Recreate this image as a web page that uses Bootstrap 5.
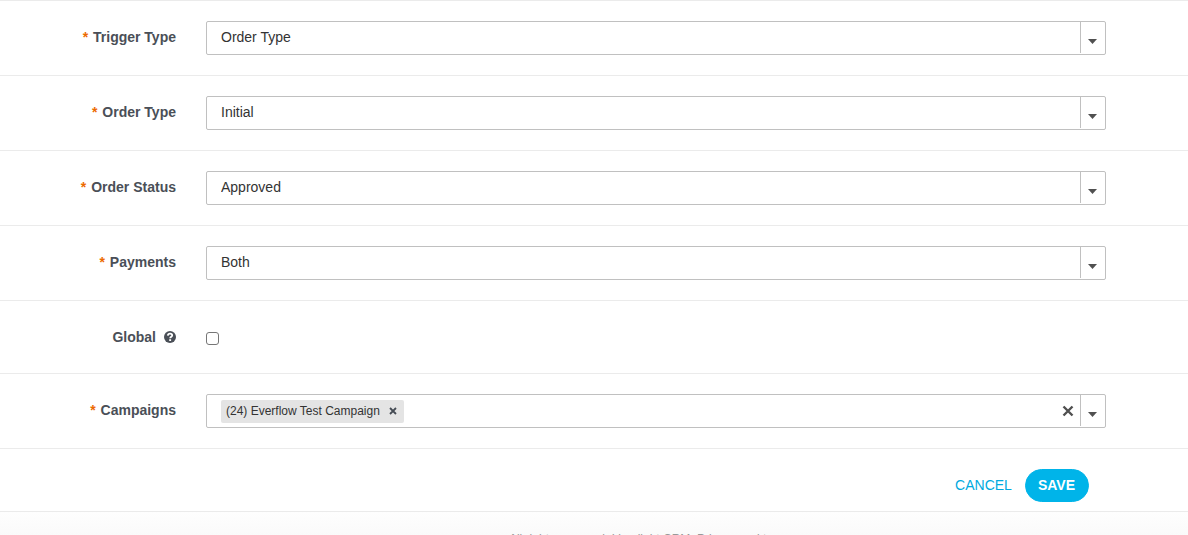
<!DOCTYPE html>
<html lang="en">
<head>
<meta charset="utf-8">
<meta name="viewport" content="width=device-width, initial-scale=1">
<title>Trigger settings</title>
<link href="https://cdn.jsdelivr.net/npm/bootstrap@5.3.0/dist/css/bootstrap.min.css" rel="stylesheet">
<style>
  html::-webkit-scrollbar { display: none; }
  body { font-family: "Liberation Sans", Arial, sans-serif; font-size: 14px; line-height: 20px; color: #333; background: #fff; }
  .form-line { border-top: 1px solid #ebebeb; padding: 20px 82px 20px 0; gap: 30px; }
  .field-label { width: 176px; padding: 6px 0 0; font-weight: 700; color: #4a4f57; text-align: right; }
  .required-mark { color: #ec6a00; margin-right: 1px; }
  .picker { height: 34px; border: 1px solid #c0c0c0; border-radius: 2px; background: #fff; }
  .picker .form-select { border: 0; border-radius: 2px; padding: 0 40px 2px 14px; font-size: 14px; line-height: 20px; color: #333; background: none; height: 32px; }
  .picker-arrow { width: 25px; height: 31px; border-left: 1px solid #c0c0c0; pointer-events: none; padding: 8px 2px 0 0; }
  .picker-open { border-width: 0 0 0 1px; background: none; pointer-events: auto; }
  .tick { height: 32px; padding-top: 11px; }
  .tick .form-check-input { width: 13px; height: 13px; margin: 0; border: 1px solid #767676; border-radius: 3px; }
  .chip { height: 23px; margin: 5px 0 0 14px; padding: 0 7px 2px 5px; gap: 9px; background: #e4e4e4; border-radius: 2px; font-size: 12px; line-height: 20px; }
  .plain { border: 0; background: none; padding: 0; line-height: 0; }
  .clear-all { margin-right: 6px; }
  .actions { padding: 20px 99px 9px 0; gap: 13px; border-top: 1px solid #ebebeb; }
  .link-cancel { color: #00a9e0; text-decoration: none; padding-bottom: 2px; }
  .btn-save { --bs-btn-color: #fff; --bs-btn-bg: #00b4e9; --bs-btn-border-color: #00b4e9; --bs-btn-hover-color: #fff; --bs-btn-hover-bg: #009fd0; height: 33px; padding: 0 13px 2px 12px; font-size: 14px; font-weight: 700; line-height: 20px; }
  .page-foot { border-top: 1px solid #ebebeb; background: linear-gradient(#fefefe, #fafafa 24px); padding: 17px 0 0 114px; font-size: 12px; line-height: 20px; color: #999; }
</style>
</head>
<body>
<form>
  <div class="form-line d-flex">
    <label class="field-label flex-shrink-0" for="trigger"><span class="required-mark">*</span> Trigger Type</label>
    <div class="picker flex-grow-1 position-relative">
      <select class="form-select" id="trigger"><option>Order Type</option></select>
      <span class="picker-arrow position-absolute top-0 end-0 d-flex align-items-center justify-content-center"><svg width="9" height="5" viewBox="0 0 9 5"><path d="M0 0h9L4.500 5z" fill="#505050"/></svg></span>
    </div>
  </div>
  <div class="form-line d-flex">
    <label class="field-label flex-shrink-0" for="order"><span class="required-mark">*</span> Order Type</label>
    <div class="picker flex-grow-1 position-relative">
      <select class="form-select" id="order"><option>Initial</option></select>
      <span class="picker-arrow position-absolute top-0 end-0 d-flex align-items-center justify-content-center"><svg width="9" height="5" viewBox="0 0 9 5"><path d="M0 0h9L4.500 5z" fill="#505050"/></svg></span>
    </div>
  </div>
  <div class="form-line d-flex">
    <label class="field-label flex-shrink-0" for="status"><span class="required-mark">*</span> Order Status</label>
    <div class="picker flex-grow-1 position-relative">
      <select class="form-select" id="status"><option>Approved</option></select>
      <span class="picker-arrow position-absolute top-0 end-0 d-flex align-items-center justify-content-center"><svg width="9" height="5" viewBox="0 0 9 5"><path d="M0 0h9L4.500 5z" fill="#505050"/></svg></span>
    </div>
  </div>
  <div class="form-line d-flex">
    <label class="field-label flex-shrink-0" for="payments"><span class="required-mark">*</span> Payments</label>
    <div class="picker flex-grow-1 position-relative">
      <select class="form-select" id="payments"><option>Both</option></select>
      <span class="picker-arrow position-absolute top-0 end-0 d-flex align-items-center justify-content-center"><svg width="9" height="5" viewBox="0 0 9 5"><path d="M0 0h9L4.500 5z" fill="#505050"/></svg></span>
    </div>
  </div>
  <div class="form-line d-flex">
    <label class="field-label flex-shrink-0 d-flex justify-content-end gap-2" for="global">Global
      <svg width="12" height="20" viewBox="0 0 12 20"><circle cx="6" cy="10" r="6" fill="#4a4f57"/><path d="M3.800 8.600C4 7.300 4.900 6.700 6 6.700c1.300 0 2.200.7 2.200 1.700C8.200 9.700 6.200 9.700 6.200 11.200" fill="none" stroke="#fff" stroke-width="1.800"/><path d="M5.200 12.200h1.900v1.800H5.200z" fill="#fff"/></svg>
    </label>
    <div class="tick d-flex"><input class="form-check-input" type="checkbox" id="global"></div>
  </div>
  <div class="form-line d-flex">
    <span class="field-label flex-shrink-0" id="campaigns"><span class="required-mark">*</span> Campaigns</span>
    <div class="picker flex-grow-1 d-flex" role="group" aria-labelledby="campaigns">
      <span class="chip d-flex align-items-center">(24) Everflow Test Campaign
        <button class="plain" type="button" aria-label="Remove campaign"><svg width="8" height="8" viewBox="0 0 8 8"><path d="M1 1l6 6M7 1L1 7" stroke="#454b54" stroke-width="1.800"/></svg></button>
      </span>
      <button class="plain clear-all ms-auto" type="button" aria-label="Clear all"><svg width="12" height="12" viewBox="0 0 12 12"><path d="M1.500 1.500l9 9M10.500 1.500l-9 9" stroke="#505050" stroke-width="2.400"/></svg></button>
      <button class="picker-arrow picker-open d-flex align-items-center justify-content-center" type="button" aria-label="Open list"><svg width="9" height="5" viewBox="0 0 9 5"><path d="M0 0h9L4.500 5z" fill="#505050"/></svg></button>
    </div>
  </div>
  <div class="actions d-flex justify-content-end align-items-center">
    <a class="link-cancel" href="#">CANCEL</a>
    <button class="btn btn-save rounded-pill" type="submit">SAVE</button>
  </div>
</form>
<footer class="page-foot text-center">All rights reserved. Limelight CRM. Privacy and terms</footer>
<script src="https://cdn.jsdelivr.net/npm/bootstrap@5.3.0/dist/js/bootstrap.bundle.min.js"></script>
</body>
</html>
